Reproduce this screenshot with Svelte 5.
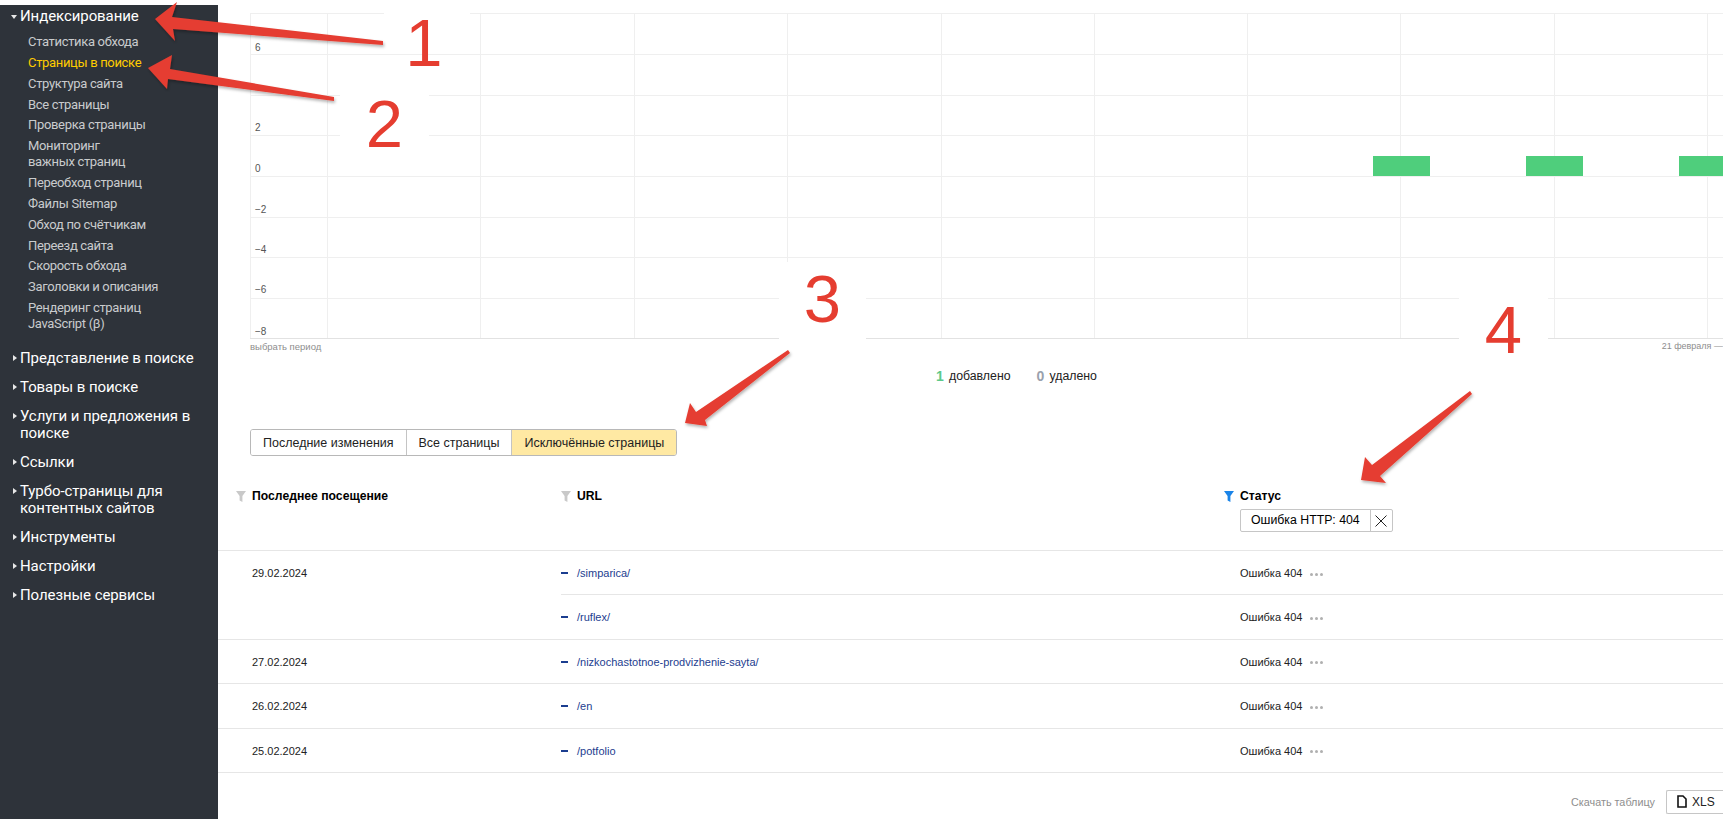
<script lang="ts">
  const subItems = [
    "Статистика обхода",
    "Страницы в поиске",
    "Структура сайта",
    "Все страницы",
    "Проверка страницы",
    "Мониторинг\nважных страниц",
    "Переобход страниц",
    "Файлы Sitemap",
    "Обход по счётчикам",
    "Переезд сайта",
    "Скорость обхода",
    "Заголовки и описания",
    "Рендеринг страниц\nJavaScript (β)",
  ];
  const sections = [
    "Представление в поиске",
    "Товары в поиске",
    "Услуги и предложения в\nпоиске",
    "Ссылки",
    "Турбо-страницы для\nконтентных сайтов",
    "Инструменты",
    "Настройки",
    "Полезные сервисы",
  ];

  const yLabels = [
    { t: "6", y: 51 },
    { t: "2", y: 131 },
    { t: "0", y: 172 },
    { t: "−2", y: 213 },
    { t: "−4", y: 253 },
    { t: "−6", y: 293 },
    { t: "−8", y: 335 },
  ];
  const hLines = [13, 54, 95, 135, 176, 217, 257, 298, 338];
  const vLines = [327, 480, 634, 787, 941, 1094, 1247, 1400, 1554, 1707];
  const bars = [1373, 1526, 1679];

  const groups = [
    { date: "29.02.2024", urls: ["/simparica/", "/ruflex/"] },
    { date: "27.02.2024", urls: ["/nizkochastotnoe-prodvizhenie-sayta/"] },
    { date: "26.02.2024", urls: ["/en"] },
    { date: "25.02.2024", urls: ["/potfolio"] },
  ];
</script>

<div class="page">
  <aside class="sidebar">
    <div class="head open"><span class="tri down"></span>Индексирование</div>
    <ul>
      {#each subItems as item, i}
        <li class:active={i === 1}>{item}</li>
      {/each}
    </ul>
    {#each sections as s}
      <div class="head"><span class="tri"></span>{s}</div>
    {/each}
  </aside>

  <main>
    <div class="chart">
      <svg width="1505" height="340" viewBox="218 0 1505 340">
        {#each hLines as y}
          <line x1="250" x2="1723" y1={y + 0.5} y2={y + 0.5} stroke={y === 338 ? "#e2e2e2" : "#efefef"} />
        {/each}
        {#each vLines as x}
          <line x1={x + 0.5} x2={x + 0.5} y1="13" y2="338" stroke="#efefef" />
        {/each}
        <line x1="250.5" x2="250.5" y1="13" y2="338" stroke="#efefef" />
        {#each bars as x}
          <rect {x} y="156" width="57" height="20" fill="#4fce7c" />
        {/each}
        {#each yLabels as l}
          <text x="255" y={l.y} class="tick">{l.t}</text>
        {/each}
      </svg>
    </div>
    <div class="period">
      <span>выбрать период</span>
      <span class="range">21 февраля —</span>
    </div>
    <div class="legend">
      <b class="green">1</b><span class="added">добавлено</span>
      <b class="grey">0</b><span>удалено</span>
    </div>

    <div class="tabs">
      <button>Последние изменения</button>
      <button>Все страницы</button>
      <button class="selected">Исключённые страницы</button>
    </div>

    <div class="thead">
      <div class="th">
        <svg class="funnel" viewBox="0 0 10 11"><path d="M0 0h10L6.4 5V11L3.6 9.4V5z" fill="#c9c9c9" /></svg>
        Последнее посещение
      </div>
      <div class="th">
        <svg class="funnel" viewBox="0 0 10 11"><path d="M0 0h10L6.4 5V11L3.6 9.4V5z" fill="#c9c9c9" /></svg>
        URL
      </div>
      <div class="th">
        <svg class="funnel" viewBox="0 0 10 11"><path d="M0 0h10L6.4 5V11L3.6 9.4V5z" fill="#1a84e8" /></svg>
        Статус
        <div class="chip">
          <span>Ошибка HTTP: 404</span>
          <span class="chip-x">
            <svg width="12" height="12" viewBox="0 0 12 12"><path d="M.5.5l11 11M11.5.5l-11 11" stroke="#222" fill="none" /></svg>
          </span>
        </div>
      </div>
    </div>

    {#each groups as g}
      <div class="group">
        <div class="date">{g.date}</div>
        <div class="urls">
          {#each g.urls as u}
            <div class="row">
              <div class="url"><span class="dash"></span><a href="#top">{u}</a></div>
              <div class="status">Ошибка 404 <span class="dots"><i></i><i></i><i></i></span></div>
            </div>
          {/each}
        </div>
      </div>
    {/each}

    <div class="download">
      <span>Скачать таблицу</span>
      <button class="xls">
        <svg width="10" height="13" viewBox="0 0 10 13"><path d="M1 1h5l3 3v8H1z" fill="#fff" stroke="#111" stroke-width="1.6" /></svg>
        XLS
      </button>
    </div>
  </main>

  <div class="note n1"><span>1</span></div>
  <div class="note n2"><span>2</span></div>
  <div class="note n3"><span>3</span></div>
  <div class="note n4"><span>4</span></div>

  <svg class="arrows" width="1723" height="819" viewBox="0 0 1723 819">
    <defs>
      <filter id="sh" x="-10%" y="-10%" width="120%" height="130%">
        <feDropShadow dx="1" dy="2" stdDeviation="1.5" flood-color="#000" flood-opacity="0.3" />
      </filter>
    </defs>
    <g fill="#e53d30" filter="url(#sh)">
      <path d="M155 19L177 2L172 17L383 41L383 45L173 29L175 41z" />
      <path d="M148 68L172 55L170 69L334 97L334 101L168 79L167 89z" />
      <path d="M685 423L690 403L696 412L788 350L790 353L705 420L707 426z" />
      <path d="M1361 480L1365 457L1372 465L1470 391L1472 394L1380 476L1386 483z" />
    </g>
  </svg>
</div>

<style>
  :global(body) {
    margin: 0;
    background: #fff;
  }

  .page {
    position: relative;
    display: flex;
    width: 1723px;
    height: 819px;
    overflow: hidden;
    font-family: "Liberation Sans", Arial, sans-serif;
    color: #000;
  }

  .sidebar {
    flex: 0 0 218px;
    margin-top: 5px;
    padding-top: 3px;
    box-sizing: border-box;
    background: #2e333a;
    color: #fff;
    font-family: Roboto, sans-serif;
  }

  .head {
    position: relative;
    padding-left: 20px;
    margin-bottom: 12px;
    font-size: 15px;
    letter-spacing: -0.08px;
    line-height: 17px;
    white-space: pre-line;
  }

  .head.open {
    margin-bottom: 9px;
  }

  .tri {
    position: absolute;
    left: 13px;
    top: 5px;
    border-left: 4px solid #e8e8e8;
    border-top: 3.5px solid transparent;
    border-bottom: 3.5px solid transparent;
  }

  .tri.down {
    left: 11px;
    top: 7px;
    border-top: 4px solid #e8e8e8;
    border-bottom: 0;
    border-left: 3.5px solid transparent;
    border-right: 3.5px solid transparent;
  }

  ul {
    list-style: none;
    margin: 0 0 18px;
    padding: 0 0 0 28px;
  }

  li {
    font-size: 13px;
    letter-spacing: -0.33px;
    line-height: 16px;
    margin-bottom: 4.85px;
    color: #c9cbcd;
    white-space: pre-line;
  }

  li.active {
    color: #fc0;
  }

  main {
    flex: 1;
    min-width: 0;
  }

  .chart {
    height: 340px;
  }

  .chart svg {
    display: block;
  }

  .tick {
    font-family: "Liberation Sans", sans-serif;
    font-size: 10px;
    fill: #555;
  }

  .period {
    display: flex;
    justify-content: space-between;
    margin-top: 1px;
    padding-left: 32px;
    font-size: 9.5px;
    line-height: 11px;
    color: #8e8e8e;
    white-space: nowrap;
  }

  .range {
    font-size: 9px;
  }

  .legend {
    display: flex;
    align-items: center;
    margin: 17px 0 0 718px;
    font-size: 12.3px;
    line-height: 14px;
    color: #222;
  }

  .legend b {
    width: 13px;
    font-size: 14px;
  }

  .added {
    margin-right: 26px;
  }

  .green {
    color: #5cc98a;
  }

  .grey {
    color: #9aa1ad;
  }

  .tabs {
    display: flex;
    width: fit-content;
    margin: 46px 0 0 32px;
    border: 1px solid #b8b8b8;
    border-radius: 3px;
    overflow: hidden;
  }

  .tabs button {
    height: 25px;
    padding: 0 12px;
    border: 0;
    border-left: 1px solid #c4c4c4;
    background: #fff;
    font: 12.5px "Liberation Sans", Arial, sans-serif;
    color: #222;
  }

  .tabs button:first-child {
    border-left: 0;
  }

  .tabs button.selected {
    background: #ffe9a3;
  }

  .thead {
    display: grid;
    grid-template-columns: 325px 663px 1fr;
    height: 95px;
    padding-top: 33px;
    padding-left: 34px;
    box-sizing: border-box;
    border-bottom: 1px solid #e6e6e6;
  }

  .th {
    position: relative;
    font-size: 12.2px;
    font-weight: 700;
    line-height: 14px;
  }

  .funnel {
    position: absolute;
    left: -16px;
    top: 2px;
    width: 10px;
    height: 11px;
  }

  .chip {
    display: flex;
    width: fit-content;
    margin-top: 6px;
    height: 23px;
    box-sizing: border-box;
    border: 1px solid #c6c6c6;
    border-radius: 2px;
    font-size: 12.3px;
    font-weight: 400;
    line-height: 21px;
  }

  .chip > span:first-child {
    padding: 0 10px;
  }

  .chip-x {
    display: flex;
    align-items: center;
    justify-content: center;
    width: 21px;
    border-left: 1px solid #c6c6c6;
  }

  .group {
    display: grid;
    grid-template-columns: 309px 1fr;
    padding-left: 34px;
    border-bottom: 1px solid #e6e6e6;
  }

  .date,
  .row {
    height: 43.4px;
    font-size: 11px;
    line-height: 44px;
    color: #222;
  }

  .row {
    display: grid;
    grid-template-columns: 679px 1fr;
    box-sizing: content-box;
    border-bottom: 1px solid #e6e6e6;
  }

  .urls .row:last-child {
    border-bottom: 0;
  }

  .url {
    display: flex;
    align-items: center;
  }

  .url a {
    color: #23408f;
    text-decoration: none;
  }

  .dash {
    width: 7px;
    height: 2px;
    margin-right: 9px;
    background: #1b3d8f;
  }

  .dots {
    display: inline-flex;
    gap: 2px;
    margin-left: 5px;
    vertical-align: middle;
  }

  .dots i {
    width: 3px;
    height: 3px;
    border-radius: 50%;
    background: #b0b0b0;
  }

  .download {
    display: flex;
    align-items: center;
    justify-content: flex-end;
    gap: 11px;
    margin-top: 17px;
    font-size: 10.8px;
    color: #8e8e8e;
  }

  .xls {
    display: flex;
    align-items: center;
    gap: 5px;
    width: 57px;
    height: 24px;
    padding: 0 0 0 10px;
    border: 1px solid #c6c6c6;
    border-right: 0;
    border-radius: 2px 0 0 2px;
    background: #fff;
    font: 12px "Liberation Sans", Arial, sans-serif;
    color: #222;
  }

  .note {
    position: absolute;
    display: flex;
    align-items: center;
    justify-content: center;
    background: #fff;
    font-size: 67px;
    color: #e53d30;
    box-sizing: border-box;
  }

  .n1 {
    left: 384px;
    top: 0;
    width: 86px;
    height: 53px;
    padding-top: 32px;
    padding-right: 6px;
  }

  .n2 {
    left: 340px;
    top: 90px;
    width: 89px;
    height: 50px;
    padding-top: 16px;
  }

  .n3 {
    left: 779px;
    top: 262px;
    width: 87px;
    height: 78px;
    padding-bottom: 6px;
  }

  .n4 {
    left: 1459px;
    top: 295px;
    width: 89px;
    height: 50px;
    padding-top: 18px;
  }

  .note span {
    line-height: 1;
  }

  .arrows {
    position: absolute;
    left: 0;
    top: 0;
    pointer-events: none;
  }
</style>
